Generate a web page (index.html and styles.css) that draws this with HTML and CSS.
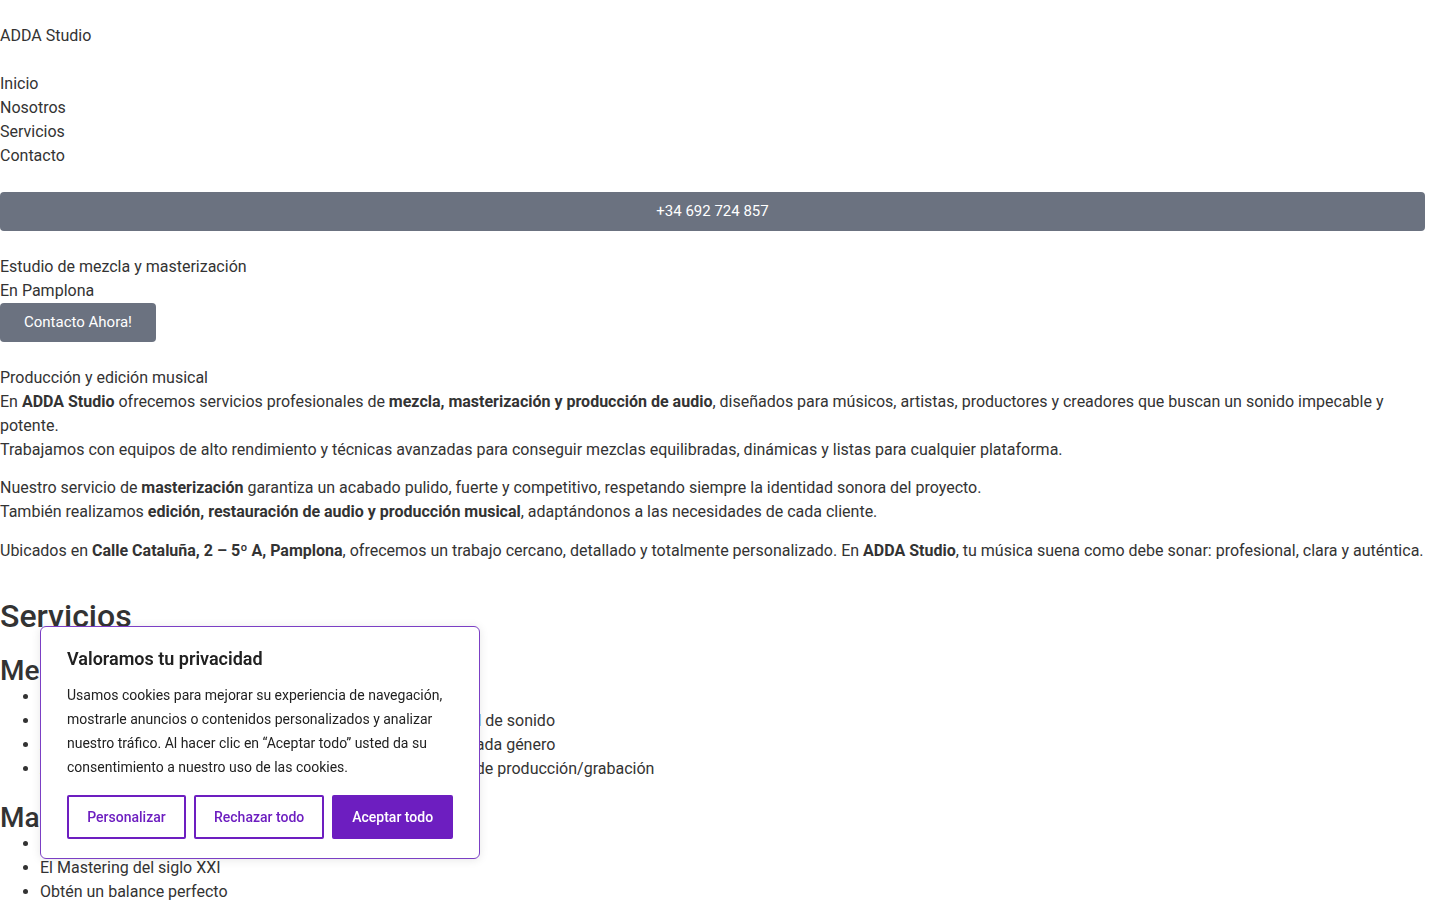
FILE: index.html
```html
<!DOCTYPE html>
<html lang="es">
<head>
  <meta charset="UTF-8">
  <meta name="viewport" content="width=device-width, initial-scale=1.0">
  <title>ADDA Studio - Mezcla y masterización en Pamplona</title>
  <link rel="stylesheet" href="styles.css">
</head>
<body>
  <header class="site-header">
    <p class="brand">ADDA Studio</p>
    <nav>
      <ul class="menu">
        <li><a href="#">Inicio</a></li>
        <li><a href="#">Nosotros</a></li>
        <li><a href="#">Servicios</a></li>
        <li><a href="#">Contacto</a></li>
      </ul>
    </nav>
    <a class="btn btn-phone" href="#">+34 692 724 857</a>
  </header>

  <main>
    <section class="hero">
      <p>Estudio de mezcla y masterización</p>
      <p>En Pamplona</p>
      <a class="btn btn-cta" href="#">Contacto Ahora!</a>
    </section>

    <section class="about">
      <p class="about-title">Producción y edición musical</p>
      <p>En <strong>ADDA Studio</strong> ofrecemos servicios profesionales de <strong>mezcla, masterización y producción de audio</strong>, diseñados para músicos, artistas, productores y creadores que buscan un sonido impecable y potente.<br>Trabajamos con equipos de alto rendimiento y técnicas avanzadas para conseguir mezclas equilibradas, dinámicas y listas para cualquier plataforma.</p>
      <p>Nuestro servicio de <strong>masterización</strong> garantiza un acabado pulido, fuerte y competitivo, respetando siempre la identidad sonora del proyecto.<br>También realizamos <strong>edición, restauración de audio y producción musical</strong>, adaptándonos a las necesidades de cada cliente.</p>
      <p>Ubicados en <strong>Calle Cataluña, 2 – 5º A, Pamplona</strong>, ofrecemos un trabajo cercano, detallado y totalmente personalizado. En <strong>ADDA Studio</strong>, tu música suena como debe sonar: profesional, clara y auténtica.</p>
    </section>

    <section class="services">
      <h2>Servicios</h2>

      <h3>Mezcla</h3>
      <ul class="service-list">
        <li>Mezcla analógica y digital</li>
        <li>Mezclas con máxima claridad, profundidad, potencia y calidad de sonido</li>
        <li>Ajustes personalizados según el estilo y el sonido propio de cada género</li>
        <li>Adaptación a cualquier tipo de trabajo musical y a su estudio de producción/grabación</li>
      </ul>

      <h3>Masterización</h3>
      <ul class="service-list">
        <li>Masterización para plataformas digitales</li>
        <li>El Mastering del siglo XXI</li>
        <li>Obtén un balance perfecto</li>
        <li>Volumen competitivo sin perder dinámica</li>
      </ul>

      <h3>Producción</h3>
      <ul class="service-list">
        <li>Producción musical desde cero</li>
        <li>Arreglos e instrumentación</li>
        <li>Grabación de voces e instrumentos</li>
      </ul>

      <h3>Edición y restauración</h3>
      <ul class="service-list">
        <li>Edición de voces y afinación</li>
        <li>Limpieza de ruidos y restauración de audio</li>
        <li>Edición de tiempos y cuantización</li>
      </ul>
    </section>

    <section class="about">
      <h2>Nosotros</h2>
      <p>Somos un estudio independiente con años de experiencia en la mezcla y masterización de proyectos de todos los estilos: rock, pop, urbano, electrónica, folk y mucho más.</p>
      <p>Cada proyecto recibe una atención individual y cuidada, con comunicación directa durante todo el proceso.</p>
    </section>

    <section class="about">
      <h2>Contacto</h2>
      <p>Calle Cataluña, 2 – 5º A, Pamplona</p>
      <p>Teléfono: +34 692 724 857</p>
      <p>Horario: lunes a viernes de 10:00 a 20:00</p>
      <a class="btn btn-cta" href="#">Contacto Ahora!</a>
    </section>
  </main>

  <footer class="site-footer">
    <p>© 2025 ADDA Studio. Todos los derechos reservados.</p>
    <p>Aviso legal · Política de privacidad · Política de cookies</p>
  </footer>

  <!-- Cookie notice -->
  <div class="cookie-banner">
    <p class="cookie-title">Valoramos tu privacidad</p>
    <p class="cookie-text">Usamos cookies para mejorar su experiencia de navegación, mostrarle anuncios o contenidos personalizados y analizar nuestro tráfico. Al hacer clic en “Aceptar todo” usted da su consentimiento a nuestro uso de las cookies.</p>
    <div class="cookie-actions">
      <button class="cookie-btn cookie-btn-wide">Personalizar</button>
      <button class="cookie-btn">Rechazar todo</button>
      <button class="cookie-btn cookie-btn-accept">Aceptar todo</button>
    </div>
  </div>
</body>
</html>
```

FILE: styles.css
```css
/* Base */
* {
  box-sizing: border-box;
}

body {
  margin: 0 15px 0 0;
  font-family: 'Roboto', 'Liberation Sans', sans-serif;
  font-size: 16px;
  line-height: 24px;
  color: #333;
  background: #fff;
}

p {
  margin: 0;
}

a {
  color: inherit;
  text-decoration: none;
}

/* Header */
.site-header {
  padding-top: 24px;
}

.brand {
  margin-bottom: 24px;
}

.menu {
  list-style: none;
  margin: 0;
  padding: 0;
}

.btn {
  display: inline-block;
  background-color: #6b7280;
  color: #fff;
  font-size: 15px;
  line-height: 21px;
  padding: 9px 24px;
  border-radius: 4px;
  text-align: center;
}

.btn-phone {
  display: block;
  margin-top: 24px;
}

/* Content */
.hero {
  margin-top: 24px;
}

.hero .btn-cta {
  vertical-align: top;
}

.about {
  margin-top: 24px;
}

.about p + p {
  margin-top: 14px;
}

.about p:last-child {
  margin-top: 15px;
}

.about .about-title + p {
  margin-top: 0;
}

.about .btn-cta {
  margin-top: 16px;
}

.services {
  margin-top: 35px;
}

h2 {
  font-size: 32px;
  line-height: 36px;
  font-weight: 500;
  margin: 0 0 19px;
}

.about h2 {
  margin-top: 40px;
}

h3 {
  font-size: 28px;
  line-height: 36px;
  font-weight: 500;
  margin: 0;
}

.service-list {
  margin: -4px 0 19px;
  padding-left: 40px;
}

/* Footer */
.site-footer {
  margin-top: 48px;
  padding: 24px 0 32px;
  border-top: 1px solid #e5e7eb;
}

/* Cookie banner */
.cookie-banner {
  position: fixed;
  left: 40px;
  bottom: 41px;
  width: 440px;
  padding: 20px 26px 19px;
  background: #fff;
  border: 1px solid #7b3fc4;
  border-radius: 6px;
  box-shadow: 0 1px 10px rgba(0, 0, 0, 0.1);
  color: #212121;
  z-index: 10;
}

.cookie-title {
  font-size: 18px;
  line-height: 24px;
  font-weight: 600;
  margin-bottom: 12px;
}

.cookie-text {
  font-size: 14px;
  line-height: 24px;
}

.cookie-actions {
  display: flex;
  gap: 8px;
  margin-top: 16px;
}

.cookie-btn {
  flex-shrink: 0;
  white-space: nowrap;
  font-family: inherit;
  font-size: 14px;
  font-weight: 500;
  line-height: 24px;
  padding: 8px 18px;
  background: #fff;
  color: #6d1ec0;
  border: 2px solid #6d1ec0;
  border-radius: 2px;
  cursor: pointer;
}

.cookie-btn-wide {
  width: 119px;
}

.cookie-btn-accept {
  background: #6d1ec0;
  color: #fff;
}
```
